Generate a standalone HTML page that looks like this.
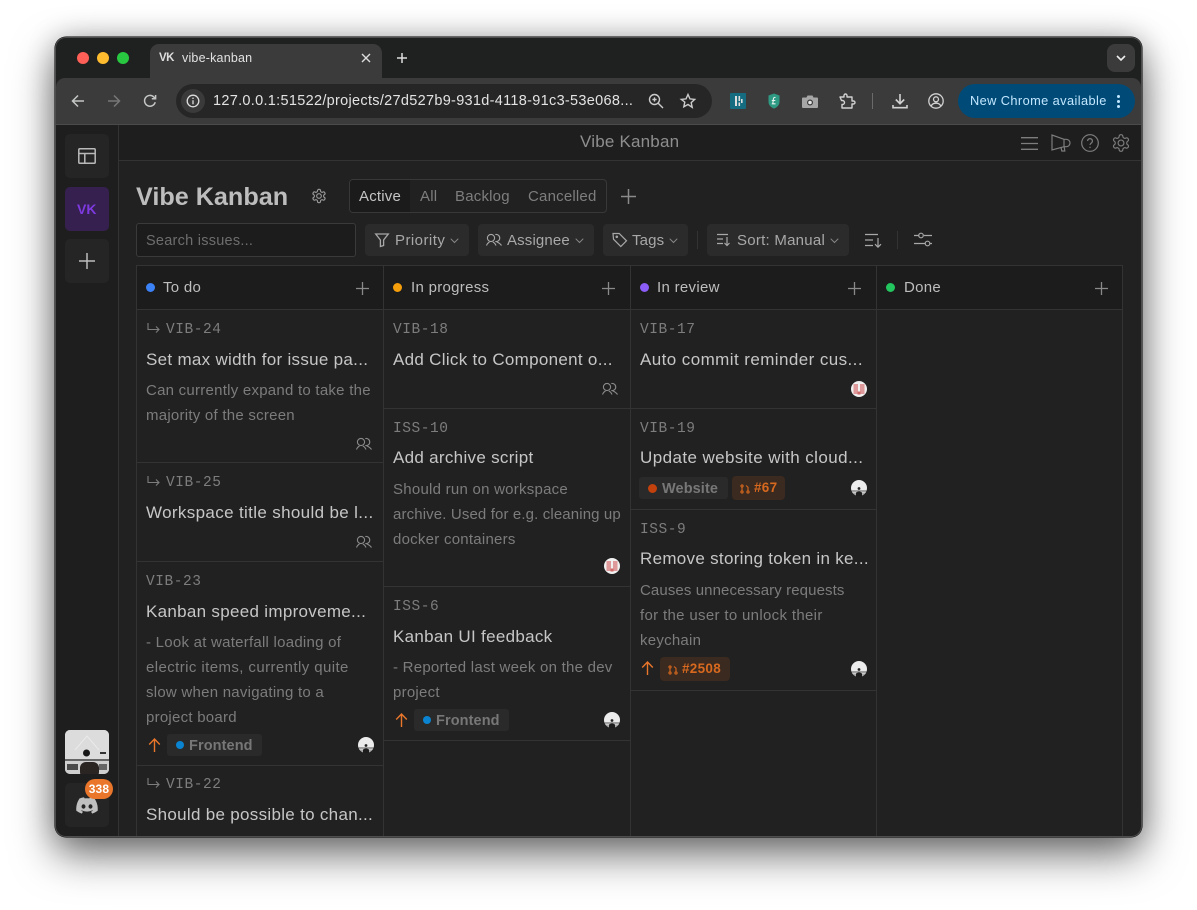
<!DOCTYPE html>
<html><head><meta charset="utf-8"><title>vibe-kanban</title>
<style>
html,body{margin:0;padding:0;background:#fff}
body{width:1197px;height:910px;overflow:hidden;position:relative;font-family:"Liberation Sans",sans-serif}
#win{position:absolute;left:55px;top:37px;width:1087px;height:800px;border-radius:11px;background:#212121;box-shadow:0 18px 42px rgba(0,0,0,.55),0 0 28px rgba(0,0,0,.22);}
.a{position:absolute}
.t{position:absolute;white-space:nowrap;line-height:20px}
.b{position:absolute;background:#333}
svg{position:absolute;overflow:visible;fill:none}
.ttl{font-size:17px;color:#c6c6c6;letter-spacing:.3px}
.dsc{font-size:15px;color:#7c7c7c;letter-spacing:.25px;margin-top:2px}
.id{font-family:"Liberation Mono",monospace;font-size:14.5px;color:#7d7d7d;letter-spacing:.55px;margin-top:1px}
.chip{position:absolute;background:#2b2b2b;border-radius:4px}
.tool{font-size:15px;color:#a8a8a8;letter-spacing:.15px;margin-top:1px}
.tab{font-size:15px;color:#7e7e7e;letter-spacing:.2px;margin-top:1px}
.hd{font-size:15px;color:#bdbdbd;letter-spacing:.3px;margin-top:1px}
.tag{position:absolute;background:#2a2a2a;border-radius:3px;height:22px}
.lbl{font-size:14.5px;font-weight:bold;color:#777;letter-spacing:.1px;margin-top:1px}
.dot{position:absolute;border-radius:50%}
.pr{position:absolute;background:#3a2a1f;border-radius:4px;height:24px}
.prt{font-size:13.5px;font-weight:bold;color:#d8691f;letter-spacing:.3px;margin-top:1px}
</style></head>
<body>
<svg width="0" height="0" style="position:absolute">
<defs>
<g id="ppl"><circle cx="5" cy="5" r="3.600"/><path d="M9.300 1.500a3.600 3.600 0 1 1 0 7M.5 12.500Q1.500 10 3.500 9M6.800 9Q9 10 10 12.500M10.800 9Q13.500 9.800 15.500 12.500"/></g>
<g id="gear"><path d="M12.220 2h-.44a2 2 0 0 0-2 2v.18a2 2 0 0 1-1 1.730l-.43.250a2 2 0 0 1-2 0l-.15-.08a2 2 0 0 0-2.730.730l-.22.380a2 2 0 0 0 .73 2.730l.15.100a2 2 0 0 1 1 1.720v.510a2 2 0 0 1-1 1.740l-.15.090a2 2 0 0 0-.73 2.730l.22.380a2 2 0 0 0 2.730.730l.15-.08a2 2 0 0 1 2 0l.43.250a2 2 0 0 1 1 1.730V20a2 2 0 0 0 2 2h.44a2 2 0 0 0 2-2v-.18a2 2 0 0 1 1-1.730l.43-.25a2 2 0 0 1 2 0l.15.080a2 2 0 0 0 2.730-.73l.22-.39a2 2 0 0 0-.73-2.730l-.15-.08a2 2 0 0 1-1-1.740v-.5a2 2 0 0 1 1-1.740l.15-.09a2 2 0 0 0 .73-2.730l-.22-.38a2 2 0 0 0-2.730-.73l-.15.080a2 2 0 0 1-2 0l-.43-.25a2 2 0 0 1-1-1.730V4a2 2 0 0 0-2-2z"/><circle cx="12" cy="12" r="3.500"/></g>
<g id="av1"><circle cx="8" cy="8" r="8" style="fill:#ececec"/><path d="M1.400 12.500A8 8 0 0 0 14.600 12.500Z" style="fill:#a8a8a8"/><rect x=".6" y="10.500" width="14.800" height="1" style="fill:#555"/><path d="M5 16v-3.500q3-2 6 0V16z" style="fill:#1d1d1d"/><circle cx="8" cy="8.500" r="1.400" style="fill:#222"/></g>
<g id="av2"><circle cx="8" cy="8" r="8" style="fill:#f0f0f0"/><path d="M2.500 3h4.500v10h-4.500zM9 3h4.500v10h-4.500z" style="fill:#de9a9a"/><rect x="6.500" y="10.500" width="3" height="3" style="fill:#cf6a6a"/></g>
<g id="git"><circle cx="2" cy="2" r="1.100"/><circle cx="2" cy="8" r="1.100"/><circle cx="8" cy="8" r="1.100"/><path d="M2 3.100v3.800M8 6.900V3.200L6 1.500"/></g>
</defs></svg>
<div id="win"></div>

<!-- Chrome tab strip -->
<div class="a" style="left:55px;top:37px;width:1087px;height:42px;background:#1f2020;border-radius:11px 11px 0 0"></div>
<div class="a" style="left:56px;top:78px;width:1085px;height:47px;background:#3b3b3b;border-radius:9px 9px 0 0"></div>
<div class="a" style="left:150px;top:44px;width:232px;height:36px;background:#3b3b3b;border-radius:9px 9px 0 0"></div>
<div class="a" style="left:77px;top:52px;width:12px;height:12px;border-radius:50%;background:#fe5f57"></div>
<div class="a" style="left:97px;top:52px;width:12px;height:12px;border-radius:50%;background:#febc2e"></div>
<div class="a" style="left:117px;top:52px;width:12px;height:12px;border-radius:50%;background:#28c840"></div>
<div class="t" style="left:159px;top:48px;font-size:11.500px;font-weight:bold;color:#ddd;letter-spacing:-.5px">VK</div>
<div class="t" style="left:182px;top:48px;font-size:12.500px;color:#e2e2e2;letter-spacing:.2px">vibe-kanban</div>
<svg style="left:362px;top:54px" width="8" height="8" stroke="#ddd" stroke-width="1.400"><path d="M0 0l8 8M8 0l-8 8"/></svg>
<svg style="left:396px;top:52px" width="12" height="12" stroke="#ddd" stroke-width="1.500"><path d="M6 1v10M1 6h10"/></svg>
<div class="a" style="left:1107px;top:44px;width:28px;height:28px;border-radius:8px;background:#3b3b3b"></div>
<svg style="left:1116px;top:55px" width="10" height="7" stroke="#eee" stroke-width="1.600"><path d="M1 1l4 4 4-4"/></svg>

<!-- Chrome toolbar -->
<svg style="left:71px;top:94px" width="14" height="14" stroke="#c4c7c5" stroke-width="1.500"><path d="M13 7H1.500M7 1.500L1.500 7 7 12.500"/></svg>
<svg style="left:107px;top:94px" width="14" height="14" stroke="#777" stroke-width="1.500"><path d="M1 7h11.500M7 1.500L12.500 7 7 12.500"/></svg>
<svg style="left:143px;top:94px" width="14" height="14" stroke="#c4c7c5" stroke-width="1.500"><path d="M12.200 8.200A5.400 5.400 0 1 1 10.800 3L12.600 4.800M12.600 1v3.800H8.800"/></svg>
<div class="a" style="left:176px;top:84px;width:536px;height:34px;border-radius:17px;background:#262626"></div>
<div class="a" style="left:181px;top:89px;width:24px;height:24px;border-radius:50%;background:#3a3a3a"></div>
<svg style="left:186px;top:94px" width="14" height="14" stroke="#ddd" stroke-width="1.300"><circle cx="7" cy="7" r="5.800"/><path d="M7 6.200v4M7 3.600v1.400"/></svg>
<div class="t" style="left:213px;top:91px;font-size:14.500px;color:#e3e3e3;letter-spacing:.3px">127.0.0.1:51522/projects/27d527b9-931d-4118-91c3-53e068...</div>
<svg style="left:648px;top:93px" width="16" height="16" stroke="#ccc" stroke-width="1.400"><circle cx="6.500" cy="6.500" r="5"/><path d="M10.200 10.200L15 15M4.400 6.500h4.200M6.500 4.400v4.200"/></svg>
<svg style="left:680px;top:93px" width="16" height="16" stroke="#ccc" stroke-width="1.400"><path d="M8 1.500l2 4.400 4.700.5-3.500 3.200 1 4.700L8 11.500l-4.200 2.300 1-4.700L1.300 6.400 6 5.900z"/></svg>
<div class="a" style="left:730px;top:93px;width:16px;height:16px;background:#156b80;border-radius:1px"></div>
<svg style="left:730px;top:93px" width="16" height="16"><rect x="5" y="3" width="2" height="10" style="fill:#ddd"/><rect x="8.500" y="3" width="1.600" height="5" style="fill:#ddd"/><rect x="8.500" y="9.500" width="1.600" height="3.500" style="fill:#ddd"/><rect x="11" y="6" width="1.600" height="4" style="fill:#ddd"/></svg>
<svg style="left:768px;top:93px" width="12" height="16"><path d="M6 .5L11.500 2.500V9C11.500 12.500 8 15 6 15.500 4 15 .5 12.500 .5 9V2.500z" style="fill:#2f9a84"/><path d="M7.500 4.500C6 4 5.300 5 5.300 7L4.800 10.500M3.800 7.500H7.300M3.800 10.800H7.500" stroke="#e8f3f0" stroke-width="1.100"/></svg>
<svg style="left:802px;top:94px" width="16" height="14"><path d="M1 3.500h3.500L5.500 1.500h5l1 2H15a1 1 0 0 1 1 1V13a1 1 0 0 1-1 1H1a1 1 0 0 1-1-1V4.500a1 1 0 0 1 1-1z" style="fill:#a6a6a6"/><circle cx="8" cy="8.500" r="3" style="fill:#3b3b3b"/><circle cx="8" cy="8.500" r="1.800" style="fill:#e5e5e5"/></svg>
<svg style="left:839px;top:93px" width="16" height="16" stroke="#d2d2d2" stroke-width="1.400"><path d="M1 4h4V2.500a1.500 1.500 0 0 1 3 0V4h5v4h1.500a1.500 1.500 0 0 1 0 3H13v4H3v-3.500h.5a2 2 0 0 0 0-4H2.500z" stroke-linejoin="round"/></svg>
<div class="b" style="left:872px;top:93px;width:1px;height:16px;background:#6a6a6a"></div>
<svg style="left:892px;top:93px" width="16" height="16" stroke="#d2d2d2" stroke-width="1.600"><path d="M8 1v9.500M3.800 6.500L8 10.700l4.200-4.200M1 12v2.700h14V12"/></svg>
<svg style="left:928px;top:93px" width="16" height="16" stroke="#d2d2d2" stroke-width="1.300"><circle cx="8" cy="8" r="7.200"/><circle cx="8" cy="6.300" r="2.500"/><path d="M3.300 12.800c1-2 2.800-2.600 4.700-2.600s3.700.6 4.700 2.600"/></svg>
<div class="a" style="left:958px;top:84px;width:177px;height:34px;border-radius:17px;background:#004a77"></div>
<div class="t" style="left:970px;top:91px;font-size:12.800px;color:#c2e7ff;letter-spacing:.4px">New Chrome available</div>
<div class="a" style="left:1117px;top:95px;width:3px;height:3px;border-radius:50%;background:#c2e7ff;box-shadow:0 5px 0 #c2e7ff,0 10px 0 #c2e7ff"></div>

<div class="b" style="left:56px;top:124px;width:1085px;height:1px;background:#4a4a4a"></div>

<!-- App body -->
<div class="a" style="left:56px;top:125px;width:1085px;height:711px;background:#1e1e1e;border-radius:0 0 10px 10px"></div>
<div class="a" style="left:119px;top:161px;width:1022px;height:675px;background:#212121;border-radius:0 0 10px 0"></div>
<div class="b" style="left:118px;top:125px;width:1px;height:711px"></div>
<div class="b" style="left:119px;top:160px;width:1022px;height:1px"></div>
<div class="t" style="left:580px;top:132px;font-size:17px;color:#8e8e8e;letter-spacing:.2px">Vibe Kanban</div>

<svg style="left:1021px;top:137px" width="17" height="13" stroke="#7d7d7d" stroke-width="1.300"><path d="M0 .7h17M0 6.500h17M0 12.300h17"/></svg>
<svg style="left:1051px;top:134px" width="19" height="18" stroke="#7d7d7d" stroke-width="1.200"><path d="M1 1v15l12-3.300h2.300a3.700 3.700 0 0 0 0-7.400H13zM13 5.300v7.400M10 13.500l.8 3.500h3l-.6-4.300"/></svg>
<svg style="left:1081px;top:134px" width="18" height="18" stroke="#7d7d7d" stroke-width="1.200"><circle cx="9" cy="9" r="8.300"/><path d="M6.600 7a2.400 2.400 0 1 1 3.600 2.100C9.400 9.600 9 10 9 11M9 12.800v1.200"/></svg>
<svg style="left:1111px;top:133px" width="20" height="20" viewBox="0 0 24 24" stroke="#7d7d7d" stroke-width="1.400"><use href="#gear"/></svg>

<!-- Sidebar -->
<div class="a" style="left:65px;top:134px;width:44px;height:44px;border-radius:5px;background:#252525"></div>
<svg style="left:78px;top:148px" width="18" height="16" stroke="#b9b9b9" stroke-width="1.500"><rect x=".8" y=".8" width="16.400" height="14.400" rx="1"/><path d="M.8 5.500h16.400M6.800 5.500v9.700"/></svg>
<div class="a" style="left:65px;top:187px;width:44px;height:44px;border-radius:5px;background:#35204f"></div>
<div class="t" style="left:77px;top:199px;font-size:14px;font-weight:bold;color:#7e3ae0">VK</div>
<div class="a" style="left:65px;top:239px;width:44px;height:44px;border-radius:5px;background:#252525"></div>
<svg style="left:79px;top:253px" width="16" height="16" stroke="#bdbdbd" stroke-width="1.500"><path d="M8 0v16M0 8h16"/></svg>

<div class="a" style="left:65px;top:730px;width:44px;height:44px;border-radius:5px;overflow:hidden;background:#e2e2e2">
<svg style="left:0;top:0" width="44" height="44"><rect width="44" height="29" style="fill:#dcdcdc"/><path d="M10 20L22 6l12 14" stroke="#eaeaea" stroke-width="1"/><rect x="0" y="29" width="44" height="2" style="fill:#666"/><rect x="0" y="31" width="44" height="13" style="fill:#cfcfcf"/><rect x="2" y="34" width="11" height="6" style="fill:#4a4a4a"/><rect x="34" y="34" width="8" height="6" style="fill:#666"/><circle cx="21.500" cy="23" r="3.500" style="fill:#181818"/><rect x="15" y="32" width="19" height="16" rx="6" style="fill:#2a2422"/><rect x="35" y="22" width="6" height="2" style="fill:#333"/></svg></div>
<div class="a" style="left:65px;top:783px;width:44px;height:44px;border-radius:5px;background:#252525"></div>
<svg style="left:76px;top:797px" width="22" height="17"><path d="M18.500 1.500A18 18 0 0 0 14 .2l-.6 1.200a16 16 0 0 0-4.800 0L8 .2A18 18 0 0 0 3.500 1.500C.7 5.700 0 9.800.3 13.800A18 18 0 0 0 5.800 16.600l1.200-1.900-1.900-.9.500-.4a13 13 0 0 0 10.800 0l.5.4-1.900.9 1.200 1.900a18 18 0 0 0 5.500-2.800c.4-4.700-.8-8.700-3.200-12.300z" style="fill:#c0c0c0"/><ellipse cx="7.500" cy="9.500" rx="2" ry="2.200" style="fill:#252525"/><ellipse cx="14.500" cy="9.500" rx="2" ry="2.200" style="fill:#252525"/></svg>
<div class="a" style="left:85px;top:779px;width:28px;height:20px;border-radius:10px;background:#e9762b"></div>
<div class="t" style="left:85px;top:779px;width:28px;text-align:center;font-size:12px;font-weight:bold;color:#fff;letter-spacing:.2px">338</div>

<!-- Project header -->
<div class="t" style="left:136px;top:183px;line-height:28px;font-size:25.200px;font-weight:bold;color:#bdbdbd">Vibe Kanban</div>
<svg style="left:311px;top:188px" width="16" height="16" viewBox="0 0 24 24" stroke="#9a9a9a" stroke-width="1.700"><use href="#gear"/></svg>
<div class="a" style="left:349px;top:179px;width:256px;height:32px;border:1px solid #383838;border-radius:4px"></div>
<div class="a" style="left:350px;top:180px;width:60px;height:32px;background:#1b1b1b;border-radius:3px 0 0 3px"></div>
<div class="t tab" style="left:359px;top:186px;color:#c4c4c4">Active</div>
<div class="t tab" style="left:420px;top:186px">All</div>
<div class="t tab" style="left:455px;top:186px">Backlog</div>
<div class="t tab" style="left:528px;top:186px">Cancelled</div>
<svg style="left:621px;top:189px" width="15" height="15" stroke="#8a8a8a" stroke-width="1.500"><path d="M7.500 0v15M0 7.500h15"/></svg>

<!-- Toolbar -->
<div class="a" style="left:136px;top:223px;width:218px;height:32px;border:1px solid #3a3a3a;border-radius:3px;background:#1c1c1c"></div>
<div class="t" style="left:146px;top:231px;font-size:14.500px;color:#6d6d6d;letter-spacing:.25px">Search issues...</div>

<div class="chip" style="left:365px;top:224px;width:104px;height:32px"></div>
<svg style="left:375px;top:233px" width="14" height="14" stroke="#a8a8a8" stroke-width="1.300"><path d="M.7 1h12.600L8.600 7v5.500l-3.200 1V7z"/></svg>
<div class="t tool" style="left:395px;top:230px;letter-spacing:.45px">Priority</div>
<svg style="left:450px;top:238px" width="9" height="6" stroke="#888" stroke-width="1"><path d="M.7.700l3.800 3.800L8.300.700"/></svg>

<div class="chip" style="left:478px;top:224px;width:116px;height:32px"></div>
<svg style="left:486px;top:233px" width="16" height="13" stroke="#a8a8a8" stroke-width="1.100"><use href="#ppl"/></svg>
<div class="t tool" style="left:507px;top:230px">Assignee</div>
<svg style="left:575px;top:238px" width="9" height="6" stroke="#888" stroke-width="1"><path d="M.7.700l3.800 3.800L8.300.700"/></svg>

<div class="chip" style="left:603px;top:224px;width:85px;height:32px"></div>
<svg style="left:612px;top:232px" width="16" height="16" stroke="#a8a8a8" stroke-width="1.200"><path d="M1 1.500h6.200l7.300 7.300-5.700 5.700L1.500 7.200z"/><circle cx="4.800" cy="4.800" r=".7"/></svg>
<div class="t tool" style="left:632px;top:230px">Tags</div>
<svg style="left:669px;top:238px" width="9" height="6" stroke="#888" stroke-width="1"><path d="M.7.700l3.800 3.800L8.300.700"/></svg>

<div class="b" style="left:697px;top:231px;width:1px;height:18px"></div>
<div class="chip" style="left:707px;top:224px;width:142px;height:32px"></div>
<svg style="left:717px;top:233px" width="14" height="13" stroke="#a8a8a8" stroke-width="1.200"><path d="M0 1.500h11M0 6h6M0 10.500h6M10 4v8.500M7.500 10l2.500 2.500 2.500-2.500"/></svg>
<div class="t tool" style="left:737px;top:230px;letter-spacing:.25px">Sort: Manual</div>
<svg style="left:830px;top:238px" width="9" height="6" stroke="#888" stroke-width="1"><path d="M.7.700l3.800 3.800L8.300.700"/></svg>
<svg style="left:865px;top:233px" width="17" height="15" stroke="#a8a8a8" stroke-width="1.200"><path d="M0 1.500h13M0 7h8M0 12.500h8M13 5v9M10 11.200l3 3 3-3"/></svg>
<div class="b" style="left:897px;top:231px;width:1px;height:18px"></div>
<svg style="left:914px;top:232px" width="18" height="16" stroke="#a8a8a8" stroke-width="1.200"><path d="M0 3.500h4.500M10 3.500h8M0 11.500h11M16 11.500h2"/><circle cx="7" cy="3.500" r="2.300"/><circle cx="13.500" cy="11.500" r="2.300"/></svg>

<!-- Board -->
<div class="a" style="left:137px;top:266px;width:985px;height:43px;background:#1c1c1c"></div>
<div class="b" style="left:136px;top:265px;width:987px;height:1px"></div>
<div class="b" style="left:136px;top:309px;width:987px;height:1px"></div>
<div class="b" style="left:136px;top:265px;width:1px;height:571px"></div>
<div class="b" style="left:383px;top:265px;width:1px;height:571px"></div>
<div class="b" style="left:630px;top:265px;width:1px;height:571px"></div>
<div class="b" style="left:876px;top:265px;width:1px;height:571px"></div>
<div class="b" style="left:1122px;top:265px;width:1px;height:571px"></div>

<div class="dot" style="left:146px;top:283px;width:9px;height:9px;background:#3b82f6"></div>
<div class="t hd" style="left:163px;top:277px">To do</div>
<div class="dot" style="left:393px;top:283px;width:9px;height:9px;background:#f59e0b"></div>
<div class="t hd" style="left:411px;top:277px">In progress</div>
<div class="dot" style="left:640px;top:283px;width:9px;height:9px;background:#8b5cf6"></div>
<div class="t hd" style="left:657px;top:277px">In review</div>
<div class="dot" style="left:886px;top:283px;width:9px;height:9px;background:#22c55e"></div>
<div class="t hd" style="left:904px;top:277px">Done</div>
<svg style="left:356px;top:282px" width="13" height="13" stroke="#8a8a8a" stroke-width="1.300"><path d="M6.500 0v13M0 6.500h13"/></svg>
<svg style="left:602px;top:282px" width="13" height="13" stroke="#8a8a8a" stroke-width="1.300"><path d="M6.500 0v13M0 6.500h13"/></svg>
<svg style="left:848px;top:282px" width="13" height="13" stroke="#8a8a8a" stroke-width="1.300"><path d="M6.500 0v13M0 6.500h13"/></svg>
<svg style="left:1095px;top:282px" width="13" height="13" stroke="#8a8a8a" stroke-width="1.300"><path d="M6.500 0v13M0 6.500h13"/></svg>

<!-- Column 1 -->
<svg style="left:147px;top:323px" width="14" height="12" stroke="#7d7d7d" stroke-width="1.100"><path d="M1 0v6.500h11M9 3.500l3 3-3 3"/></svg>
<div class="t id" style="left:166px;top:319px">VIB-24</div>
<div class="t ttl" style="left:146px;top:350px">Set max width for issue pa...</div>
<div class="t dsc" style="left:146px;top:379px">Can currently expand to take the</div>
<div class="t dsc" style="left:146px;top:404px">majority of the screen</div>
<svg style="left:356px;top:437px" width="16" height="13" stroke="#8a8a8a" stroke-width="1.100"><use href="#ppl"/></svg>
<div class="b" style="left:137px;top:462px;width:246px;height:1px"></div>

<svg style="left:147px;top:476px" width="14" height="12" stroke="#7d7d7d" stroke-width="1.100"><path d="M1 0v6.500h11M9 3.500l3 3-3 3"/></svg>
<div class="t id" style="left:166px;top:472px">VIB-25</div>
<div class="t ttl" style="left:146px;top:503px;letter-spacing:.35px">Workspace title should be l...</div>
<svg style="left:356px;top:535px" width="16" height="13" stroke="#8a8a8a" stroke-width="1.100"><use href="#ppl"/></svg>
<div class="b" style="left:137px;top:561px;width:246px;height:1px"></div>

<div class="t id" style="left:146px;top:571px">VIB-23</div>
<div class="t ttl" style="left:146px;top:602px">Kanban speed improveme...</div>
<div class="t dsc" style="left:146px;top:631px">- Look at waterfall loading of</div>
<div class="t dsc" style="left:146px;top:656px;letter-spacing:.41px">electric items, currently quite</div>
<div class="t dsc" style="left:146px;top:681px">slow when navigating to a</div>
<div class="t dsc" style="left:146px;top:706px">project board</div>
<svg style="left:148px;top:738px" width="13" height="14" stroke="#e9762b" stroke-width="1.400"><path d="M6.500 14V1M1.200 6.500L6.500 1l5.300 5.500"/></svg>
<div class="tag" style="left:167px;top:734px;width:95px"></div>
<div class="dot" style="left:176px;top:741px;width:8px;height:8px;background:#0a84d0"></div>
<div class="t lbl" style="left:189px;top:735px">Frontend</div>
<svg style="left:358px;top:737px" width="16" height="16"><use href="#av1"/></svg>
<div class="b" style="left:137px;top:765px;width:246px;height:1px"></div>

<svg style="left:147px;top:778px" width="14" height="12" stroke="#7d7d7d" stroke-width="1.100"><path d="M1 0v6.500h11M9 3.500l3 3-3 3"/></svg>
<div class="t id" style="left:166px;top:774px">VIB-22</div>
<div class="t ttl" style="left:146px;top:805px">Should be possible to chan...</div>

<!-- Column 2 -->
<div class="t id" style="left:393px;top:319px">VIB-18</div>
<div class="t ttl" style="left:393px;top:350px">Add Click to Component o...</div>
<svg style="left:602px;top:382px" width="16" height="13" stroke="#8a8a8a" stroke-width="1.100"><use href="#ppl"/></svg>
<div class="b" style="left:384px;top:408px;width:246px;height:1px"></div>

<div class="t id" style="left:393px;top:418px">ISS-10</div>
<div class="t ttl" style="left:393px;top:448px">Add archive script</div>
<div class="t dsc" style="left:393px;top:478px">Should run on workspace</div>
<div class="t dsc" style="left:393px;top:503px;letter-spacing:.13px">archive. Used for e.g. cleaning up</div>
<div class="t dsc" style="left:393px;top:528px">docker containers</div>
<svg style="left:604px;top:558px" width="16" height="16"><use href="#av2"/></svg>
<div class="b" style="left:384px;top:586px;width:246px;height:1px"></div>

<div class="t id" style="left:393px;top:596px">ISS-6</div>
<div class="t ttl" style="left:393px;top:627px">Kanban UI feedback</div>
<div class="t dsc" style="left:393px;top:656px">- Reported last week on the dev</div>
<div class="t dsc" style="left:393px;top:681px">project</div>
<svg style="left:395px;top:713px" width="13" height="14" stroke="#e9762b" stroke-width="1.400"><path d="M6.500 14V1M1.200 6.500L6.500 1l5.300 5.500"/></svg>
<div class="tag" style="left:414px;top:709px;width:95px"></div>
<div class="dot" style="left:423px;top:716px;width:8px;height:8px;background:#0a84d0"></div>
<div class="t lbl" style="left:436px;top:710px">Frontend</div>
<svg style="left:604px;top:712px" width="16" height="16"><use href="#av1"/></svg>
<div class="b" style="left:384px;top:740px;width:246px;height:1px"></div>

<!-- Column 3 -->
<div class="t id" style="left:640px;top:319px">VIB-17</div>
<div class="t ttl" style="left:640px;top:350px;letter-spacing:.42px">Auto commit reminder cus...</div>
<svg style="left:851px;top:381px" width="16" height="16"><use href="#av2"/></svg>
<div class="b" style="left:631px;top:408px;width:245px;height:1px"></div>

<div class="t id" style="left:640px;top:418px">VIB-19</div>
<div class="t ttl" style="left:640px;top:448px;letter-spacing:.42px">Update website with cloud...</div>
<div class="tag" style="left:639px;top:477px;width:89px"></div>
<div class="dot" style="left:648px;top:484px;width:9px;height:9px;background:#c2410c"></div>
<div class="t lbl" style="left:662px;top:478px">Website</div>
<div class="pr" style="left:732px;top:476px;width:53px"></div>
<svg style="left:740px;top:484px" width="10" height="10" stroke="#d8691f" stroke-width="1.100"><use href="#git"/></svg>
<div class="t prt" style="left:754px;top:477px">#67</div>
<svg style="left:851px;top:480px" width="16" height="16"><use href="#av1"/></svg>
<div class="b" style="left:631px;top:509px;width:245px;height:1px"></div>

<div class="t id" style="left:640px;top:519px">ISS-9</div>
<div class="t ttl" style="left:640px;top:549px">Remove storing token in ke...</div>
<div class="t dsc" style="left:640px;top:579px;letter-spacing:.1px">Causes unnecessary requests</div>
<div class="t dsc" style="left:640px;top:604px;letter-spacing:.33px">for the user to unlock their</div>
<div class="t dsc" style="left:640px;top:629px">keychain</div>
<svg style="left:641px;top:661px" width="13" height="14" stroke="#e9762b" stroke-width="1.400"><path d="M6.500 14V1M1.200 6.500L6.500 1l5.300 5.500"/></svg>
<div class="pr" style="left:660px;top:657px;width:70px"></div>
<svg style="left:668px;top:665px" width="10" height="10" stroke="#d8691f" stroke-width="1.100"><use href="#git"/></svg>
<div class="t prt" style="left:682px;top:658px">#2508</div>
<svg style="left:851px;top:661px" width="16" height="16"><use href="#av1"/></svg>
<div class="b" style="left:631px;top:690px;width:245px;height:1px"></div>

<!-- Window rim over content -->
<div class="a" style="left:55px;top:37px;width:1087px;height:800px;box-sizing:border-box;border:1px solid #4e4e4e;border-radius:11px;box-shadow:0 0 0 .5px #000"></div>
</body></html>
